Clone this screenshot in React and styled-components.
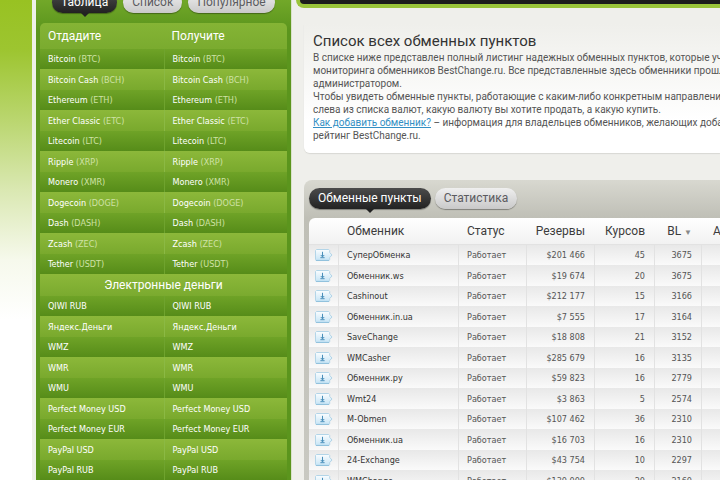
import styled, { createGlobalStyle, css } from 'styled-components';

const cryptoRows = [
  ['Bitcoin', '(BTC)'],
  ['Bitcoin Cash', '(BCH)'],
  ['Ethereum', '(ETH)'],
  ['Ether Classic', '(ETC)'],
  ['Litecoin', '(LTC)'],
  ['Ripple', '(XRP)'],
  ['Monero', '(XMR)'],
  ['Dogecoin', '(DOGE)'],
  ['Dash', '(DASH)'],
  ['Zcash', '(ZEC)'],
  ['Tether', '(USDT)'],
];

const moneyRows = [
  ['QIWI RUB'],
  ['Яндекс.Деньги'],
  ['WMZ'],
  ['WMR'],
  ['WMU'],
  ['Perfect Money USD'],
  ['Perfect Money EUR'],
  ['PayPal USD'],
  ['PayPal RUB'],
];

const exchangers = [
  ['СуперОбменка', '$201 466', 45, 3675],
  ['Обменник.ws', '$19 674', 20, 3675],
  ['Cashinout', '$212 177', 15, 3166],
  ['Обменник.in.ua', '$7 555', 17, 3164],
  ['SaveChange', '$18 808', 21, 3152],
  ['WMCasher', '$285 679', 16, 3135],
  ['Обменник.ру', '$59 823', 16, 2779],
  ['Wmt24', '$3 863', 5, 2574],
  ['M-Obmen', '$107 462', 36, 2310],
  ['Обменник.ua', '$16 703', 16, 2310],
  ['24-Exchange', '$43 754', 10, 2297],
  ['WMChange', '$130 000', 20, 2160],
];

function CurrencyRow({ name, code }) {
  return (
    <tr>
      <td>{name} {code && <Code>{code}</Code>}</td>
      <td>{name} {code && <Code>{code}</Code>}</td>
    </tr>
  );
}

function GoIcon() {
  return (
    <svg width="18" height="12" viewBox="0 0 18 12" aria-hidden="true">
      <defs>
        <linearGradient id="go" x1="0" y1="0" x2="0" y2="1">
          <stop offset="0" stopColor="#fafdff" />
          <stop offset="1" stopColor="#c6e4f5" />
        </linearGradient>
      </defs>
      <path d="M1.5 .5h12.2l1 1v2l2.3 2.5-2.3 2.5v2l-1 1H1.5l-1-1v-9z" fill="url(#go)" stroke="#b3d5e8" />
      <path d="M.8 11.4h13.4" stroke="#8fc0dc" />
      <path d="M7.5 2.8v5M5.8 6l1.7 1.9L9.2 6M5.4 8.7h4.2" fill="none" stroke="#4a8fba" />
    </svg>
  );
}

export default function App() {
  return (
    <>
      <GlobalStyle />
      <Page>
        <Sidebar>
          <SideTabs>
            <Tab $active>Таблица</Tab>
            <Tab>Список</Tab>
            <Tab>Популярное</Tab>
          </SideTabs>
          <CurrencyTable>
            <thead>
              <tr>
                <th>Отдадите</th>
                <th>Получите</th>
              </tr>
            </thead>
            <tbody>
              {cryptoRows.map(([name, code]) => (
                <CurrencyRow key={name} name={name} code={code} />
              ))}
            </tbody>
            <tbody>
              <tr>
                <GroupTitle colSpan="2">Электронные деньги</GroupTitle>
              </tr>
            </tbody>
            <tbody>
              {moneyRows.map(([name]) => (
                <CurrencyRow key={name} name={name} />
              ))}
            </tbody>
          </CurrencyTable>
        </Sidebar>

        <Main>
          <TopBar />
          <Intro>
            <h1>Список всех обменных пунктов</h1>
            <p>
              В списке ниже представлен полный листинг надежных обменных пунктов, которые участвуют<br />
              мониторинга обменников BestChange.ru. Все представленные здесь обменники прошли<br />
              администратором.
            </p>
            <p>
              Чтобы увидеть обменные пункты, работающие с каким-либо конкретным направлением<br />
              слева из списка валют, какую валюту вы хотите продать, а какую купить.
            </p>
            <p>
              <a href="#add">Как добавить обменник?</a> – информация для владельцев обменников, желающих добавиться<br />
              рейтинг BestChange.ru.
            </p>
          </Intro>

          <Panel>
            <PanelTabs>
              <Tab $active>Обменные пункты</Tab>
              <Tab>Статистика</Tab>
            </PanelTabs>
            <ExchangeTable>
              <colgroup>
                <col width="30" />
                <col width="120" />
                <col width="68" />
                <col width="68" />
                <col width="60" />
                <col width="47" />
                <col />
              </colgroup>
              <thead>
                <tr>
                  <th />
                  <th>Обменник</th>
                  <th>Статус</th>
                  <NumHead>Резервы</NumHead>
                  <NumHead>Курсов</NumHead>
                  <NumHead>BL <Sort>▼</Sort></NumHead>
                  <LastHead>Age</LastHead>
                </tr>
              </thead>
              <tbody>
                {exchangers.map(([name, reserve, rates, bl]) => (
                  <tr key={name}>
                    <IconCell><GoIcon /></IconCell>
                    <NameCell>{name}</NameCell>
                    <td>Работает</td>
                    <NumCell>{reserve}</NumCell>
                    <NumCell>{rates}</NumCell>
                    <NumCell>{bl}</NumCell>
                    <td />
                  </tr>
                ))}
              </tbody>
            </ExchangeTable>
          </Panel>
        </Main>
      </Page>
    </>
  );
}

const GlobalStyle = createGlobalStyle`
  * {
    box-sizing: border-box;
  }

  body {
    margin: 0;
    overflow: hidden;
    font-family: Roboto, 'Noto Sans', sans-serif;
    font-size: 10px;
    color: #555;
    background: #efefeb;
  }

  button {
    font-family: inherit;
  }
`;

const Page = styled.div`
  display: flex;
  height: 100vh;
  overflow: hidden;
  padding-left: 32px;
  background: linear-gradient(#98c222 0, #9dc530 50px, #bad66f 120px, #dae8b2 190px, #f6f9ec 260px, #fff 320px);
`;

const Sidebar = styled.aside`
  flex: 0 0 260px;
  padding: 0 4px;
  border-left: 4px solid #eef1e8;
  border-right: 1px solid #d9e2ca;
  background: linear-gradient(#72a829 0, #5b951d 30px);
`;

const SideTabs = styled.div`
  display: flex;
  gap: 6px;
  margin: -8px 0 10px;
  padding-left: 12px;
`;

const Tab = styled.button`
  position: relative;
  height: 21px;
  padding: 0 9px;
  border: none;
  border-radius: 11px;
  font-size: 12px;
  line-height: 21px;
  white-space: nowrap;
  color: #5b5b60;
  background: linear-gradient(#efefef, #c9c9c9);
  box-shadow: 0 1px 1px rgba(0, 0, 0, 0.35);

  ${({ $active }) =>
    $active &&
    css`
      color: #fff;
      background: linear-gradient(#4b4b4b, #222);

      &::after {
        content: '';
        position: absolute;
        left: 50%;
        top: 100%;
        margin-left: -4px;
        border: 4px solid transparent;
        border-top-color: #222;
        border-bottom: none;
      }
    `}
`;

const CurrencyTable = styled.table`
  width: 100%;
  table-layout: fixed;
  border-spacing: 0;
  border-radius: 5px 5px 0 0;
  overflow: hidden;
  text-align: left;
  white-space: nowrap;
  color: #fff;

  th {
    height: 26px;
    padding: 0 8px;
    font-size: 12px;
    font-weight: 400;
    background: linear-gradient(#85b435, #7aab2f);
  }

  td {
    height: 20px;
    padding: 0 8px;
    border-left: 1px solid #6fa32e;
    font-family: 'DejaVu Sans Condensed', 'Noto Sans', sans-serif;
    font-size: 9px;
    background: linear-gradient(#6fa327, #568c19);
  }

  td:first-child {
    border-left: none;
  }

  tbody tr:nth-child(even) td {
    height: 21px;
    border-color: #8bb944;
    background: linear-gradient(#8cb83a, #79a92d);
  }
`;

const GroupTitle = styled.th`
  && {
    height: 22px;
    text-align: center;
    background: linear-gradient(#8cb83a, #7aaa2f);
  }
`;

const Code = styled.span`
  color: #cfe2a6;
`;

const Main = styled.main`
  flex: 1;
  min-width: 0;
  overflow: hidden;
  padding-left: 4px;
  background: #efefeb;
`;

const TopBar = styled.div`
  height: 8px;
  border-left: 4px solid #9ac43a;
  border-bottom: 4px solid #9ac43a;
  border-radius: 0 0 0 8px;
  background: #1c1c1c;
`;

const Intro = styled.section`
  margin: 16px 0 27px 8px;
  padding: 8px 9px 11px;
  border-radius: 0 0 0 6px;
  background: linear-gradient(#efefeb, #fff 75%);
  box-shadow: 0 1px 1px #d8d8d4;
  white-space: nowrap;

  h1 {
    margin: 0;
    font-size: 15px;
    font-weight: 400;
    line-height: 19px;
    color: #333;
  }

  p {
    margin: 0;
    line-height: 13px;
  }

  a {
    color: #338fc4;
  }
`;

const Panel = styled.section`
  margin-left: 8px;
  min-width: 460px;
  padding: 8px 0 0 5px;
  border-radius: 8px 0 0 0;
  background: linear-gradient(#d8d8d0, #bfbfb6 38px, #c9c9c2);
`;

const PanelTabs = styled.div`
  display: flex;
  gap: 4px;
  margin-bottom: 9px;
`;

const ExchangeTable = styled.table`
  width: 100%;
  table-layout: fixed;
  border-spacing: 0;
  border-radius: 6px 0 0 0;
  overflow: hidden;
  text-align: left;
  white-space: nowrap;

  th {
    height: 27px;
    padding: 0 8px;
    border-bottom: 1px solid #e2e2e2;
    font-size: 12px;
    font-weight: 400;
    color: #3c3c3c;
    background: linear-gradient(#fff, #f2f2f2);
  }

  td {
    height: 20px;
    padding: 0 8px;
    border-right: 1px solid #e2e2e2;
    font-family: 'DejaVu Sans Condensed', 'Noto Sans', sans-serif;
    font-size: 9px;
    background: linear-gradient(#e8e8e8, #fafafa);
  }

  tbody tr:nth-child(even) td {
    height: 21px;
  }
`;

const NumHead = styled.th`
  && {
    padding: 0 10px 0 0;
    text-align: right;
  }
`;

const LastHead = styled.th`
  && {
    padding-left: 11px;
  }
`;

const Sort = styled.span`
  font-size: 8px;
  color: #888;
`;

const IconCell = styled.td`
  && {
    padding: 0 0 0 6px;
  }

  svg {
    display: block;
  }
`;

const NameCell = styled.td`
  color: #333;
`;

const NumCell = styled.td`
  && {
    padding: 0 9px 0 0;
    text-align: right;
  }
`;
